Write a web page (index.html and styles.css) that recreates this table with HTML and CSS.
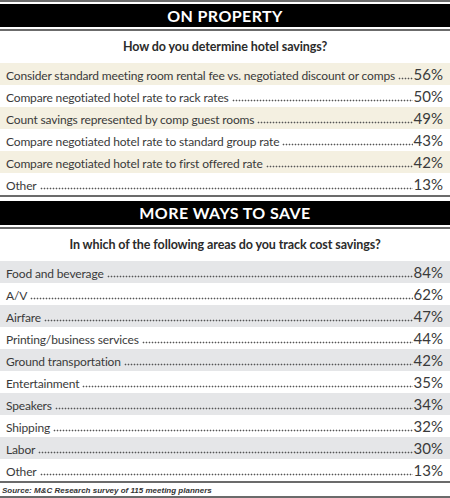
FILE: index.html
```html
<!DOCTYPE html>
<html lang="en">
<head>
    <meta charset="UTF-8">
    <meta name="viewport" content="width=device-width, initial-scale=1.0">
    <title>Hotel Savings Survey</title>
    <link rel="stylesheet" href="styles.css">
</head>
<body>
    <div class="chart">
        <div class="section-head first">
            <h2 class="section-title">ON PROPERTY</h2>
        </div>
        <p class="question">How do you determine hotel savings?</p>
        <ul class="rows beige">
            <li class="row"><span class="label">Consider standard meeting room rental fee vs. negotiated discount or comps</span><span class="dots"></span><span class="pct">56%</span></li>
            <li class="row"><span class="label">Compare negotiated hotel rate to rack rates</span><span class="dots"></span><span class="pct">50%</span></li>
            <li class="row"><span class="label">Count savings represented by comp guest rooms</span><span class="dots"></span><span class="pct">49%</span></li>
            <li class="row"><span class="label">Compare negotiated hotel rate to standard group rate</span><span class="dots"></span><span class="pct">43%</span></li>
            <li class="row"><span class="label">Compare negotiated hotel rate to first offered rate</span><span class="dots"></span><span class="pct">42%</span></li>
            <li class="row"><span class="label">Other</span><span class="dots"></span><span class="pct">13%</span></li>
        </ul>

        <div class="section-head second">
            <h2 class="section-title">MORE WAYS TO SAVE</h2>
        </div>
        <p class="question">In which of the following areas do you track cost savings?</p>
        <ul class="rows grey">
            <li class="row"><span class="label">Food and beverage</span><span class="dots"></span><span class="pct">84%</span></li>
            <li class="row"><span class="label">A/V</span><span class="dots"></span><span class="pct">62%</span></li>
            <li class="row"><span class="label">Airfare</span><span class="dots"></span><span class="pct">47%</span></li>
            <li class="row"><span class="label">Printing/business services</span><span class="dots"></span><span class="pct">44%</span></li>
            <li class="row"><span class="label">Ground transportation</span><span class="dots"></span><span class="pct">42%</span></li>
            <li class="row"><span class="label">Entertainment</span><span class="dots"></span><span class="pct">35%</span></li>
            <li class="row"><span class="label">Speakers</span><span class="dots"></span><span class="pct">34%</span></li>
            <li class="row"><span class="label">Shipping</span><span class="dots"></span><span class="pct">32%</span></li>
            <li class="row"><span class="label">Labor</span><span class="dots"></span><span class="pct">30%</span></li>
            <li class="row"><span class="label">Other</span><span class="dots"></span><span class="pct">13%</span></li>
        </ul>

        <p class="source">Source: M&amp;C Research survey of 115 meeting planners</p>
    </div>
</body>
</html>
```

FILE: styles.css
```css
* {
    margin: 0;
    padding: 0;
    box-sizing: border-box;
}

body {
    font-family: Lato, 'Open Sans', sans-serif;
    background-color: white;
    color: #333;
}

.chart {
    width: 450px;
}

/* black title bars framed by grey rules */
.section-head {
    border-top: 2px solid #6b6b6b;
    border-bottom: 2px solid #6b6b6b;
    padding: 2px 0;
}

.section-title {
    background: black;
    color: white;
    height: 23px;
    font-size: 16px;
    font-weight: 700;
    letter-spacing: 0.4px;
    text-align: center;
    line-height: 24px;
}

.section-head.second {
    border-top: none;
    padding-top: 2px;
}

.section-head.second .section-title {
    height: 24px;
}

.question {
    height: 32px;
    line-height: 32px;
    text-align: center;
    font-size: 12.5px;
    font-weight: 700;
    letter-spacing: -0.1px;
    color: #2b2b2b;
}

.rows {
    list-style: none;
    border-bottom: 2px solid #6b6b6b;
    margin-bottom: 2px;
}

.row {
    height: 22px;
    display: flex;
    align-items: baseline;
    padding: 0 7px 0 6px;
    line-height: 22px;
}

.beige .row:nth-child(odd) {
    background-color: #f4f0e1;
}

.grey .row:nth-child(odd) {
    background-color: #e5e6e8;
}

.label {
    font-size: 12px;
    letter-spacing: -0.15px;
    color: #3a3a3a;
    white-space: nowrap;
}

.dots {
    flex: 1;
    height: 4px;
    margin: 0 1px 0 3px;
    background-image: radial-gradient(circle, #555 0.75px, transparent 1.1px);
    background-size: 3px 3px;
    background-repeat: repeat-x;
    background-position: left bottom;
}

.pct {
    font-size: 15px;
    color: #3a3a3a;
}

.source {
    font-family: 'Liberation Sans', Arial, sans-serif;
    font-size: 8px;
    font-weight: 700;
    font-style: italic;
    color: #333;
    height: 14px;
    line-height: 12px;
    padding-left: 2px;
    border-bottom: 3px solid #6b6b6b;
}
```
